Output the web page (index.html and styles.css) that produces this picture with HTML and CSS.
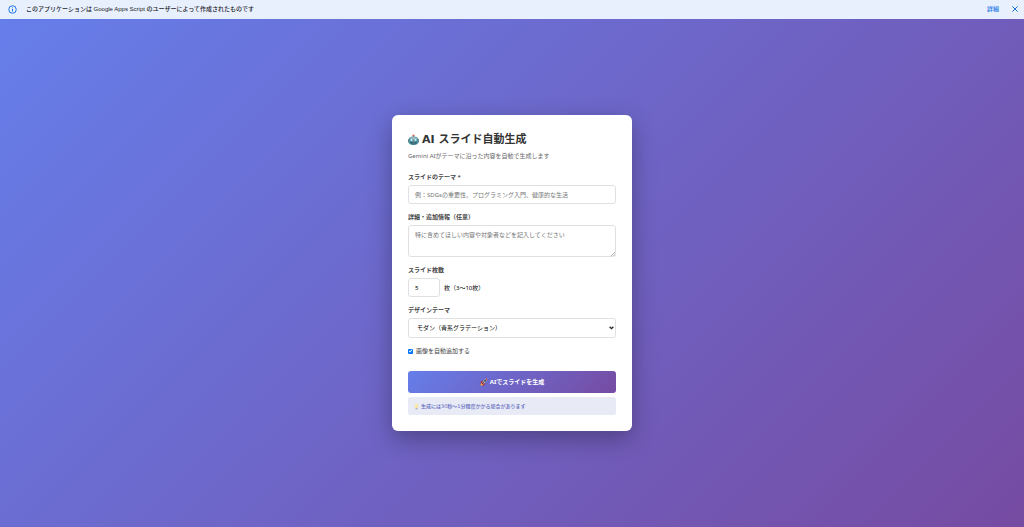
FILE: index.html
```html
<!DOCTYPE html>
<html lang="ja">
    <head>
        <title>AI スライド自動生成</title>
        <meta charset="utf-8" />
        <meta name="viewport" content="width=device-width, initial-scale=1" />
        <link rel="stylesheet" href="styles.css">
    </head>
    <body>
        <header class="banner">
            <svg class="info-icon" viewBox="0 0 18 18" aria-hidden="true">
                <circle cx="9" cy="9" r="7.5" />
                <path d="M9 8v5M9 5v1.6" />
            </svg>
            <span class="banner-text">このアプリケーションは Google Apps Script のユーザーによって作成されたものです</span>
            <a class="banner-link" href="#">詳細</a>
            <button class="banner-close" type="button" aria-label="閉じる">
                <svg viewBox="0 0 12 12"><path d="M2 2l8 8M10 2l-8 8" /></svg>
            </button>
        </header>

        <main class="page">
            <form class="card">
                <h1 class="title">
                    <svg class="title-icon" viewBox="0 0 22 22" aria-hidden="true">
                        <path d="M11 2v5" stroke="#788b91" stroke-width="2" />
                        <circle cx="11" cy="3" r="2.2" fill="#d9604f" />
                        <rect x="0" y="10" width="3" height="7" rx="1.5" fill="#8a6a6c" />
                        <rect x="19" y="10" width="3" height="7" rx="1.5" fill="#8a6a6c" />
                        <path d="M1 13c0-6 4-8 10-8s10 2 10 8v3c0 4-4 6-10 6s-10-2-10-6z" fill="#4a96a3" />
                        <path d="M4 9c1-2 4-3 7-3s6 1 7 3l-1 2H5z" fill="#9db9c0" />
                        <circle cx="7" cy="12" r="2.2" fill="#c9f1f4" />
                        <circle cx="15" cy="12" r="2.2" fill="#c9f1f4" />
                        <path d="M11 12l1.5 3h-3z" fill="#c65a51" />
                        <path d="M4 16h14c-1 4-4 5-7 5s-6-1-7-5z" fill="#2a5c69" />
                        <path d="M7 18h8" stroke="#8fc0c8" stroke-width="1" />
                    </svg>
                    AI スライド自動生成
                </h1>
                <p class="subtitle">Gemini AIがテーマに沿った内容を自動で生成します</p>

                <div class="field">
                    <label for="theme">スライドのテーマ *</label>
                    <input class="control" id="theme" type="text" placeholder="例：SDGsの重要性、プログラミング入門、健康的な生活" />
                </div>

                <div class="field">
                    <label for="details">詳細・追加情報（任意）</label>
                    <div class="control-wrap">
                        <textarea class="control" id="details" placeholder="特に含めてほしい内容や対象者などを記入してください"></textarea>
                        <svg class="grip" viewBox="0 0 5 5" aria-hidden="true"><path d="M0 5l5-5M3 5l2-2" /></svg>
                    </div>
                </div>

                <div class="field">
                    <label for="count">スライド枚数</label>
                    <div class="count-row">
                        <input class="control count" id="count" type="number" min="3" max="10" value="5" />
                        <span>枚（3〜10枚）</span>
                    </div>
                </div>

                <div class="field">
                    <label for="design">デザインテーマ</label>
                    <div class="control-wrap">
                        <select class="control" id="design">
                            <option>モダン（青系グラデーション）</option>
                        </select>
                        <svg class="chevron" viewBox="0 0 8 6" aria-hidden="true"><path d="M1 1l3 3 3-3" /></svg>
                    </div>
                </div>

                <div class="check-row">
                    <input id="images" type="checkbox" checked />
                    <label for="images">画像を自動追加する</label>
                </div>

                <button class="submit" type="submit">
                    <svg class="submit-icon" viewBox="0 0 16 16" aria-hidden="true">
                        <path d="M1 15c0-3 1-5 3-5l2 2c0 2-2 3-5 3z" fill="#f6a82b" />
                        <path d="M6 5L2 7 1 11l4-2zM11 10l-2 4-4 1 2-4z" fill="#b92d2f" />
                        <path d="M4 10C6 5 10 1 15 1c0 5-4 9-9 11z" fill="#a9b0b4" />
                        <path d="M11 2l4-1-1 4z" fill="#d63c36" />
                        <circle cx="10.5" cy="5.5" r="2" fill="#26466a" />
                        <path d="M3 11l6-5-3 6z" fill="#742830" />
                    </svg>
                    AIでスライドを生成
                </button>

                <p class="note">
                    <svg class="note-icon" viewBox="0 0 10 14" aria-hidden="true">
                        <path d="M3 10C3 8 1 7 1 5a4 4 0 0 1 8 0c0 2-2 3-2 5z" fill="#faecb0" />
                        <path d="M4 9V6l1 1 1-1v3" fill="none" stroke="#efd383" />
                        <path d="M3 10h4v2L6 13H4l-1-1z" fill="#b5b5b5" />
                    </svg>
                    生成には30秒〜1分程度かかる場合があります
                </p>
            </form>
        </main>
    </body>
</html>
```

FILE: styles.css
```css
* {
    box-sizing: border-box;
}

body {
    display: flex;
    flex-direction: column;
    min-height: 100vh;
    margin: 0;
    font-family: 'Noto Sans', 'Noto Sans CJK JP', sans-serif;
    font-size: 6px;
    line-height: 8px;
    color: #333;
}

.banner {
    display: flex;
    align-items: center;
    height: 19px;
    padding: 0 5px 1px 8px;
    background: #e8f0fe;
    color: #202124;
    font-family: 'Liberation Sans', 'Noto Sans CJK JP', sans-serif;
    font-weight: 500;
}

.info-icon {
    width: 9px;
    height: 9px;
    margin-right: 9px;
    fill: none;
    stroke: #1a73e8;
    stroke-width: 2;
}

.banner-text {
    flex: 1;
}

.banner-link {
    color: #1a73e8;
    text-decoration: none;
}

.banner-close {
    display: flex;
    margin-left: 12px;
    padding: 0;
    border: 0;
    background: none;
}

.banner-close svg {
    width: 8px;
    height: 8px;
    stroke: #1a73e8;
    stroke-width: 1.5;
}

.page {
    display: flex;
    flex: 1;
    align-items: center;
    justify-content: center;
    background: linear-gradient(135deg, #667eea 0%, #764ba2 100%);
}

.card {
    width: 100%;
    max-width: 240px;
    padding: 16px;
    border-radius: 6px;
    background: #fff;
    box-shadow: 0 8px 24px rgba(0, 0, 0, 0.3);
}

.title {
    display: flex;
    align-items: center;
    gap: 3px;
    margin: 0 0 4px;
    font-family: 'DejaVu Sans', 'Noto Sans CJK JP', sans-serif;
    font-size: 11px;
    line-height: 17px;
}

.title-icon {
    width: 11px;
    height: 11px;
}

.subtitle {
    margin: 0 0 13px;
    color: #666;
}

.field {
    margin-bottom: 9px;
}

.field label {
    display: block;
    margin-bottom: 4px;
    font-weight: 600;
    color: #444;
}

.control-wrap {
    position: relative;
}

.control {
    display: block;
    width: 100%;
    height: 19px;
    margin: 0;
    padding: 5px 6px;
    border: 1px solid #e0e0e0;
    border-radius: 3px;
    background: #fff;
    color: #000;
    font: inherit;
    appearance: none;
}

.control::placeholder {
    color: #757575;
}

textarea.control {
    height: 32px;
    resize: none;
}

select.control {
    height: 20px;
    padding: 0 8px;
}

.grip {
    position: absolute;
    right: 1px;
    bottom: 1px;
    width: 4px;
    height: 4px;
    stroke: #888;
    stroke-width: 0.8;
}

.chevron {
    position: absolute;
    top: 8px;
    right: 2px;
    width: 5px;
    height: 4px;
    fill: none;
    stroke: #222;
    stroke-width: 2;
    pointer-events: none;
}

.count-row {
    display: flex;
    align-items: center;
    gap: 4px;
    color: #000;
}

.count {
    width: 32px;
    appearance: textfield;
}

.count::-webkit-inner-spin-button {
    display: none;
}

.check-row {
    display: flex;
    align-items: center;
    gap: 3px;
    margin-bottom: 16px;
    color: #444;
}

.check-row input {
    width: 5px;
    height: 5px;
    margin: 0;
    border: 1px solid #767676;
    border-radius: 1px;
    appearance: none;
}

.check-row input:checked {
    border: 0;
    background: #0075ff;
}

.check-row input:checked::before {
    content: '';
    display: block;
    height: 100%;
    background: #fff;
    clip-path: polygon(15% 50%, 28% 38%, 42% 55%, 75% 18%, 88% 30%, 42% 82%);
}

.submit {
    display: flex;
    align-items: center;
    justify-content: center;
    gap: 2px;
    width: 100%;
    height: 22px;
    padding: 0;
    border: 0;
    border-radius: 3px;
    background: linear-gradient(135deg, #667eea 0%, #764ba2 100%);
    color: #fff;
    font: inherit;
    font-weight: 700;
}

.submit-icon {
    width: 8px;
    height: 8px;
}

.note {
    display: flex;
    align-items: center;
    gap: 2px;
    margin: 4px 0 0;
    padding: 5px 6px;
    border-radius: 2px;
    background: #e8eaf6;
    color: #5c6bc0;
    font-family: 'DejaVu Sans', 'Noto Sans CJK JP', sans-serif;
    font-size: 5px;
    font-weight: 500;
}

.note-icon {
    width: 5px;
    height: 7px;
}
```
